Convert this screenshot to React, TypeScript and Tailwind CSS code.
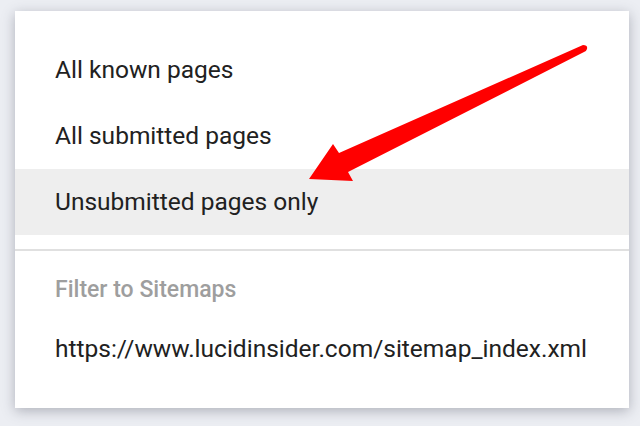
import React from 'react';

const font = { fontFamily: 'Roboto, "Liberation Sans", sans-serif' };

const options = ['All known pages', 'All submitted pages', 'Unsubmitted pages only'];

export default function App() {
    const selected = 2;

    return (
        <div className="w-[640px] h-[426px] bg-[#eceef3] pl-[15px] pt-[11px] overflow-hidden" style={font}>
            <div className="relative w-[614px] h-[397px] bg-white shadow-[0_3px_12px_rgba(60,64,80,0.35)]">
                {/* Menu options */}
                <div className="pt-[26px] pb-[14px]">
                    {options.map((label, i) => (
                        <div
                            key={label}
                            className={`h-[66px] flex items-center pl-[40px] text-[24.5px] text-[#212121] ${
                                i === selected ? 'bg-[#eeeeee]' : ''
                            }`}
                        >
                            {label}
                        </div>
                    ))}
                </div>

                <div className="h-[2px] bg-[#e0e0e0]" />

                {/* Sitemap filter */}
                <div className="pl-[40px]">
                    <div className="h-[78px] flex items-center text-[23px] font-medium text-[#9e9e9e]">
                        Filter to Sitemaps
                    </div>
                    <div className="h-[40px] flex items-center text-[24.5px] text-[#212121]">
                        https://www.lucidinsider.com/sitemap_index.xml
                    </div>
                </div>

                {/* Annotation arrow */}
                <svg
                    className="absolute left-[-15px] top-[-11px] pointer-events-none"
                    width="640"
                    height="426"
                    viewBox="0 0 640 426"
                >
                    <path
                        d="M583 45 Q588 45 587 49 Q586 52 584 52 L348 172 L353 181 L309 179 L333 144 L339 153 Z"
                        fill="#ff0000"
                        strokeLinejoin="round"
                    />
                </svg>
            </div>
        </div>
    );
}
